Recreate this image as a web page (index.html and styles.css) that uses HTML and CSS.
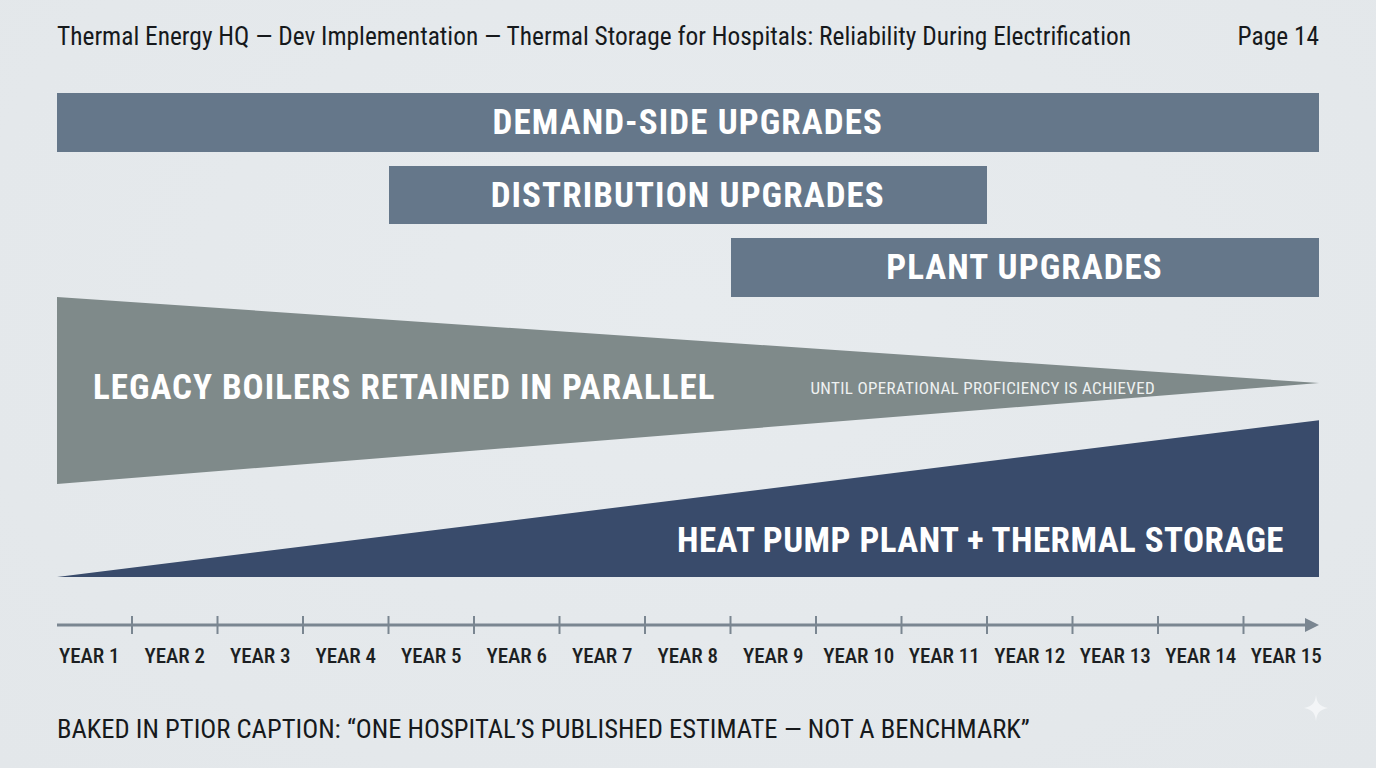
FILE: index.html
```html
<!DOCTYPE html>
<html lang="en">
<head>
<meta charset="utf-8">
<title>Thermal Storage for Hospitals</title>
<link rel="stylesheet" href="styles.css">
</head>
<body>
<main class="slide">
  <header class="header">
    <span class="title">Thermal Energy HQ — Dev Implementation — Thermal Storage for Hospitals: Reliability During Electrification</span>
    <span class="page">Page 14</span>
  </header>

  <section class="bars">
    <div class="bar bar-demand">DEMAND-SIDE UPGRADES</div>
    <div class="bar bar-dist">DISTRIBUTION UPGRADES</div>
    <div class="bar bar-plant">PLANT UPGRADES</div>
  </section>

  <section class="wedges">
    <div class="wedge wedge-legacy">
      <span class="wedge-title legacy-title">LEGACY BOILERS RETAINED IN PARALLEL</span>
      <span class="wedge-note">UNTIL OPERATIONAL PROFICIENCY IS ACHIEVED</span>
    </div>
    <div class="wedge wedge-heat">
      <span class="wedge-title heat-title">HEAT PUMP PLANT + THERMAL STORAGE</span>
    </div>
  </section>

  <section class="axis">
    <svg class="axis-line" width="1262" height="24" viewBox="0 0 1262 24" aria-hidden="true">
      <line x1="0" y1="12" x2="1250" y2="12" stroke="#7a8691" stroke-width="3"/>
      <g stroke="#7a8691" stroke-width="2">
        <line x1="75" y1="3" x2="75" y2="21"/>
        <line x1="160.5" y1="3" x2="160.5" y2="21"/>
        <line x1="246" y1="3" x2="246" y2="21"/>
        <line x1="331.5" y1="3" x2="331.5" y2="21"/>
        <line x1="417" y1="3" x2="417" y2="21"/>
        <line x1="502.5" y1="3" x2="502.5" y2="21"/>
        <line x1="588" y1="3" x2="588" y2="21"/>
        <line x1="673.5" y1="3" x2="673.5" y2="21"/>
        <line x1="759" y1="3" x2="759" y2="21"/>
        <line x1="844.5" y1="3" x2="844.5" y2="21"/>
        <line x1="930" y1="3" x2="930" y2="21"/>
        <line x1="1015.5" y1="3" x2="1015.5" y2="21"/>
        <line x1="1101" y1="3" x2="1101" y2="21"/>
        <line x1="1186.5" y1="3" x2="1186.5" y2="21"/>
      </g>
      <polygon points="1248,5 1262,12 1248,19" fill="#7a8691"/>
    </svg>
    <div class="labels">
      <span>YEAR 1</span><span>YEAR 2</span><span>YEAR 3</span><span>YEAR 4</span><span>YEAR 5</span>
      <span>YEAR 6</span><span>YEAR 7</span><span>YEAR 8</span><span>YEAR 9</span><span>YEAR 10</span>
      <span>YEAR 11</span><span>YEAR 12</span><span>YEAR 13</span><span>YEAR 14</span><span>YEAR 15</span>
    </div>
  </section>

  <footer class="caption">BAKED IN PTIOR CAPTION: “ONE HOSPITAL’S PUBLISHED ESTIMATE — NOT A BENCHMARK”</footer>

  <svg class="sparkle" width="24" height="26" viewBox="0 0 24 26" aria-hidden="true">
    <path d="M12 0 C13 8 15 11 24 13 C15 15 13 18 12 26 C11 18 9 15 0 13 C9 11 11 8 12 0 Z" fill="#f3f5f7"/>
  </svg>
</main>
</body>
</html>
```

FILE: styles.css
```css
* { box-sizing: border-box; }

html, body {
  margin: 0;
  padding: 0;
}

body {
  width: 1376px;
  height: 768px;
  overflow: hidden;
  background: #e4e8eb;
  font-family: Roboto, "DejaVu Sans Condensed", sans-serif;
  font-stretch: 75%;
  color: #1c1f22;
}

.slide {
  position: relative;
  width: 1376px;
  height: 768px;
  padding: 20px 57px 0 57px;
  background: radial-gradient(ellipse at 50% 40%, #e7ebee 0%, #e3e7ea 100%);
}

.header {
  display: flex;
  justify-content: space-between;
  align-items: baseline;
  height: 32px;
  font-size: 25.4px;
  line-height: 32px;
  white-space: nowrap;
  color: #16191c;
}

.bars {
  display: grid;
  grid-template-columns: 75px repeat(13, 85.5px) 75px;
  row-gap: 14px;
  margin-top: 41px;
}

.bar {
  height: 59px;
  display: flex;
  align-items: center;
  justify-content: center;
  background: #65778a;
  color: #ffffff;
  font-size: 35px;
  font-weight: 700;
  letter-spacing: 1.1px;
  white-space: nowrap;
}

.bar-demand { grid-column: 1 / -1; }
.bar-dist { grid-column: 5 / 12; height: 58px; }
.bar-plant { grid-column: 9 / -1; }

.wedges {
  display: grid;
  height: 280px;
}

.wedge {
  grid-area: 1 / 1;
  display: flex;
  align-items: center;
  color: #ffffff;
  white-space: nowrap;
}

.wedge-legacy {
  align-self: start;
  height: 187px;
  background: #7f8a8a;
  clip-path: polygon(0 0, 100% 46%, 0 100%);
  padding-left: 36px;
  padding-bottom: 6px;
}

.wedge-heat {
  height: 280px;
  background: #394b6b;
  clip-path: polygon(0 100%, 100% 44%, 100% 100%);
  justify-content: flex-end;
  align-items: flex-end;
  padding-right: 35px;
  padding-bottom: 16px;
}

.wedge-title {
  font-size: 35px;
  font-weight: 700;
  line-height: 40px;
}

.legacy-title {
  letter-spacing: 1px;
}

.heat-title {
  letter-spacing: 0.45px;
}

.wedge-note {
  margin-left: 95px;
  font-size: 17px;
  letter-spacing: 0.35px;
  color: #eef1f1;
}

.axis {
  margin-top: 36px;
}

.axis-line {
  display: block;
}

.labels {
  display: grid;
  grid-template-columns: repeat(15, 85.5px);
  margin-left: -10.5px;
  margin-top: 5px;
  font-size: 21px;
  line-height: 28px;
  font-weight: 500;
  white-space: nowrap;
  color: #1c1f22;
}

.labels span {
  text-align: center;
}

.caption {
  margin-top: 42px;
  font-size: 26.6px;
  line-height: 34px;
  white-space: nowrap;
  color: #16191c;
}

.sparkle {
  position: absolute;
  left: 1304px;
  top: 695px;
}
```
